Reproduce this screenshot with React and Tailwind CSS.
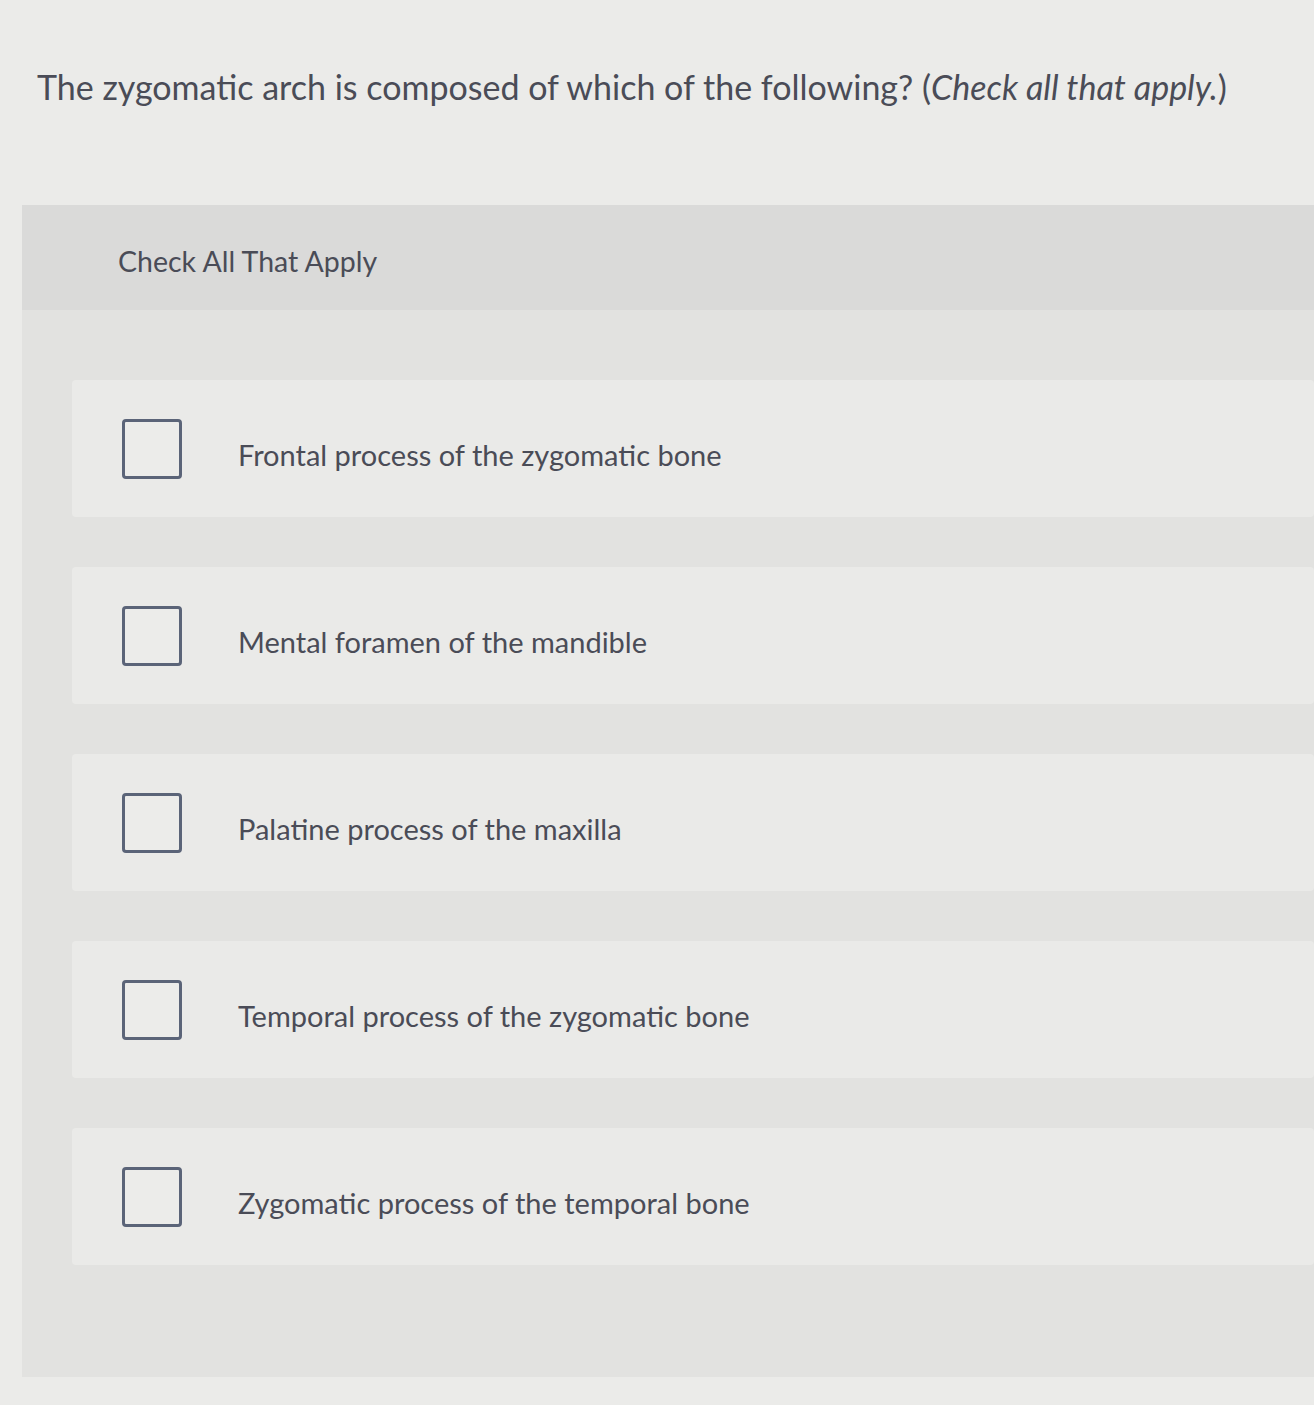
import React, { useState } from 'react';

const options = [
  'Frontal process of the zygomatic bone',
  'Mental foramen of the mandible',
  'Palatine process of the maxilla',
  'Temporal process of the zygomatic bone',
  'Zygomatic process of the temporal bone',
];

const Option = ({ label, checked, onToggle }) => (
  <label className="flex items-center h-[137px] bg-[#eaeae8] rounded-sm pl-[50px] cursor-pointer">
    <span className="w-[60px] h-[60px] shrink-0 rounded-[4px] border-[3px] border-[#5b6478] bg-[#ececea] flex items-center justify-center">
      {checked && <span className="w-[30px] h-[30px] bg-[#5b6478] rounded-sm" />}
    </span>
    <input type="checkbox" className="hidden" checked={checked} onChange={onToggle} />
    <span className="ml-[56px] pt-[12px] text-[29px] text-[#4a4c57]">{label}</span>
  </label>
);

export default function App() {
  const [checked, setChecked] = useState([]);

  const toggle = (i) =>
    setChecked((prev) => (prev.includes(i) ? prev.filter((x) => x !== i) : [...prev, i]));

  return (
    <div className="min-h-[1405px] bg-[#ebebe9] font-['Lato','Liberation_Sans',sans-serif] pt-[64px]">
      {/* Question */}
      <h1 className="pl-[37px] text-[34px] leading-[46px] text-[#4a4c57] font-normal">
        The zygomatic arch is composed of which of the following? (<em>Check all that apply.</em>)
      </h1>

      {/* Answer panel */}
      <div className="mt-[95px] ml-[22px] bg-[#e2e2e0] pb-[112px]">
        <div className="h-[105px] bg-[#dadad9] flex items-center pl-[96px]">
          <span className="pt-[8px] text-[28.5px] text-[#4a4c57]">Check All That Apply</span>
        </div>

        <div className="flex flex-col gap-[50px] pt-[70px] pl-[50px]">
          {options.map((label, i) => (
            <Option key={label} label={label} checked={checked.includes(i)} onToggle={() => toggle(i)} />
          ))}
        </div>
      </div>
    </div>
  );
}
